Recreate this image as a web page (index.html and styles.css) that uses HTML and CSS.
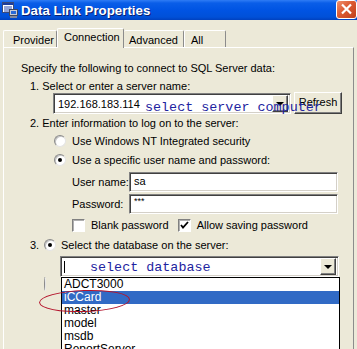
FILE: index.html
```html
<!DOCTYPE html>
<html lang="en">
<head>
    <meta charset="UTF-8">
    <title>Data Link Properties</title>
    <link rel="stylesheet" href="styles.css">
</head>
<body>
<div class="window">
    <div class="titlebar">
        <svg class="app-icon" width="16" height="16" viewBox="0 0 16 16">
            <rect x="0.5" y="0.5" width="11" height="10" fill="#fff" stroke="#3a4a7a"/>
            <rect x="1" y="1" width="10" height="2" fill="#1c3c9c"/>
            <path d="M2 5h8M2 7h8M2 9h6" stroke="#2a4ab0" stroke-width="1"/>
            <rect x="7.5" y="7.5" width="8" height="6" fill="#c8ccd8" stroke="#404860"/>
            <rect x="9" y="9" width="5" height="3" fill="#2a6ad8"/>
            <rect x="8" y="14" width="7" height="2" fill="#8088a0"/>
        </svg>
        <span class="title">Data Link Properties</span>
        <span class="close-btn">
            <svg width="19" height="17" viewBox="0 0 19 17">
                <path d="M5 3.5l9 9M14 3.5l-9 9" stroke="#fff" stroke-width="2.2"/>
            </svg>
        </span>
    </div>

    <div class="tabs">
        <div class="tab tab-provider">Provider</div>
        <div class="tab tab-connection active">Connection</div>
        <div class="tab tab-advanced">Advanced</div>
        <div class="tab tab-all">All</div>
    </div>

    <div class="panel">
        <div class="line intro">Specify the following to connect to SQL Server data:</div>
        <div class="line step step-one">1. Select or enter a server name:</div>

        <div class="server-row">
            <div class="combo combo-server">
                <span class="combo-value">192.168.183.114</span>
                <span class="drop-btn"><span class="arrow"></span></span>
            </div>
            <div class="btn btn-refresh">Refresh</div>
            <span class="note note-server">select server computer</span>
        </div>

        <div class="line step step-two">2. Enter information to log on to the server:</div>

        <div class="option-row option-nt">
            <span class="radio"></span>
            <span>Use Windows NT Integrated security</span>
        </div>
        <div class="option-row option-user">
            <span class="radio checked"></span>
            <span>Use a specific user name and password:</span>
        </div>

        <div class="field-row field-user">
            <label class="field-label">User name:</label>
            <div class="textbox">sa</div>
        </div>
        <div class="field-row field-pass">
            <label class="field-label">Password:</label>
            <div class="textbox textbox-pass">***</div>
        </div>

        <div class="check-row">
            <span class="check-item check-blank">
                <span class="checkbox"></span>
                <span>Blank password</span>
            </span>
            <span class="check-item check-allow">
                <span class="checkbox">
                    <svg width="9" height="9" viewBox="0 0 9 9"><path d="M1 4l2 2.5 5-5.5" fill="none" stroke="#000" stroke-width="1.8"/></svg>
                </span>
                <span>Allow saving password</span>
            </span>
        </div>

        <div class="step-three">
            <span class="step-num">3.</span>
            <span class="radio checked"></span>
            <span>Select the database on the server:</span>
        </div>

        <div class="db-row">
            <div class="combo combo-db">
                <span class="caret"></span>
                <span class="note note-db">select database</span>
                <span class="drop-btn"><span class="arrow"></span></span>
            </div>
        </div>

        <div class="attach-row">
            <span class="radio"></span>
        </div>

        <!-- open dropdown of the database combo -->
        <ul class="db-list">
            <li>ADCT3000</li>
            <li class="selected">iCCard</li>
            <li>master</li>
            <li>model</li>
            <li>msdb</li>
            <li>ReportServer</li>
        </ul>
        <span class="mark"></span>
    </div>
</div>
</body>
</html>
```

FILE: styles.css
```css
:root {
    --face: #ece9d8;
    --shadow: #808080;
    --dark: #404040;
    --note-blue: #1e24a0;
    --select-blue: #316ac5;
}

* {
    box-sizing: border-box;
}

body {
    margin: 0;
    width: 357px;
    height: 349px;
    overflow: hidden;
    background-color: var(--face);
    font-family: "Liberation Sans", Arial, sans-serif;
    font-size: 11px;
    color: #000;
}

/* title bar */
.titlebar {
    height: 20px;
    display: flex;
    align-items: center;
    padding-left: 2px;
    background: linear-gradient(#2f7cf5 0, #0a5ee8 3px, #0054e3 50%, #0050d8 85%, #0041bf 100%);
}

.app-icon {
    flex-shrink: 0;
}

.title {
    margin-left: 3px;
    color: #fff;
    font-weight: bold;
    font-size: 13.3px;
    text-shadow: 1px 1px #0a1e6e;
}

.close-btn {
    margin-left: auto;
    align-self: flex-start;
    width: 21px;
    height: 19px;
    border: 1px solid #fff;
    border-radius: 3px;
    background: linear-gradient(135deg, #f0906c 0%, #dc5a32 45%, #c0401c 100%);
    display: flex;
    align-items: center;
    justify-content: center;
}

/* tabs */
.tabs {
    display: flex;
    align-items: flex-end;
    height: 19px;
    margin-top: 8px;
    padding-left: 3px;
}

.tab {
    height: 17px;
    padding-top: 3px;
    line-height: 13px;
    border-top: 1px solid #fff;
    border-left: 1px solid #fff;
    border-right: 1px solid #8c8c8c;
    border-radius: 2px 2px 0 0;
    white-space: nowrap;
}

.tab-provider {
    width: 54px;
    padding-left: 9px;
}

.tab-connection {
    width: 67px;
    padding-left: 6px;
}

.tab-advanced {
    width: 60px;
    padding-left: 5px;
    border-left: none;
}

.tab-all {
    width: 42px;
    padding-left: 6px;
}

.tab.active {
    height: 20px;
    padding-top: 2px;
    margin-bottom: -1px;
    position: relative;
    z-index: 1;
    background-color: var(--face);
}

/* panel */
.panel {
    position: relative;
    overflow: hidden;
    margin-left: 3px;
    width: 351px;
    height: 302px;
    border-top: 1px solid #fff;
    border-left: 1px solid #fff;
    border-right: 1px solid #8c8c8c;
    padding: 14px 0 0 17px;
}

.line {
    height: 13px;
    line-height: 13px;
    white-space: nowrap;
}

.step {
    padding-left: 9px;
}

.step-one {
    margin-top: 5px;
    height: 12px;
    line-height: 12px;
}

.server-row {
    position: relative;
    display: flex;
    gap: 3px;
    height: 22px;
    padding-left: 32px;
}

/* classic sunken field */
.combo,
.textbox {
    background-color: #fff;
    border: 1px solid;
    border-color: var(--shadow) #fff #fff var(--shadow);
    box-shadow: inset 1px 1px var(--dark), inset -1px -1px #d4d0c8;
}

.combo {
    display: flex;
    align-items: center;
    height: 21px;
    padding: 2px;
}

.combo-server {
    width: 238px;
    margin-top: 1px;
}

.combo-value {
    padding-left: 2px;
}

.drop-btn {
    margin-left: auto;
    width: 16px;
    height: 17px;
    display: flex;
    align-items: center;
    justify-content: center;
    background-color: var(--face);
    border: 1px solid;
    border-color: #fff var(--dark) var(--dark) #fff;
    box-shadow: inset -1px -1px var(--shadow);
}

.arrow {
    width: 0;
    height: 0;
    border-left: 4px solid transparent;
    border-right: 4px solid transparent;
    border-top: 4px solid #000;
}

.btn {
    width: 48px;
    height: 22px;
    line-height: 19px;
    text-align: center;
    background-color: var(--face);
    border: 1px solid;
    border-color: #fff var(--dark) var(--dark) #fff;
    box-shadow: inset -1px -1px var(--shadow);
}

.note {
    font-family: "Liberation Mono", "Courier New", monospace;
    font-size: 13.4px;
    line-height: 14px;
    color: var(--note-blue);
    white-space: nowrap;
}

.note-server {
    position: absolute;
    left: 124px;
    top: 9px;
    z-index: 2;
}

.step-two {
    margin-top: 3px;
}

.option-row {
    display: flex;
    align-items: center;
    gap: 6px;
    height: 14px;
    padding-left: 33px;
    white-space: nowrap;
}

.option-nt {
    margin-top: 4px;
}

.option-user {
    margin-top: 5px;
}

.radio {
    position: relative;
    flex-shrink: 0;
    width: 12px;
    height: 12px;
    border-radius: 50%;
    background-color: #fff;
    border: 1px solid;
    border-color: #8a8a8a #e4e4e4 #e4e4e4 #8a8a8a;
    box-shadow: inset 1px 1px #c4c4c4;
}

.radio.checked::after {
    content: "";
    position: absolute;
    left: 3px;
    top: 3px;
    width: 4px;
    height: 4px;
    border-radius: 50%;
    background-color: #000;
}

.field-row {
    display: flex;
    align-items: center;
    height: 20px;
    padding-left: 51px;
}

.field-user {
    margin-top: 5px;
}

.field-pass {
    margin-top: 2px;
}

.field-label {
    width: 57px;
}

.textbox {
    width: 209px;
    height: 20px;
    line-height: 16px;
    padding-left: 4px;
}

.textbox-pass {
    font-size: 9px;
    line-height: 12px;
}

.check-row {
    display: flex;
    height: 14px;
    margin-top: 4px;
    padding-left: 51px;
    white-space: nowrap;
}

.check-item {
    display: flex;
    align-items: center;
    gap: 6px;
}

.check-allow {
    margin-left: 9px;
}

.checkbox {
    width: 13px;
    height: 13px;
    display: flex;
    align-items: center;
    justify-content: center;
    background-color: #fff;
    border: 1px solid;
    border-color: var(--shadow) #fff #fff var(--shadow);
    box-shadow: inset 1px 1px #b0b0b0;
}

.step-three {
    display: flex;
    align-items: center;
    height: 14px;
    margin-top: 6px;
    padding-left: 9px;
    white-space: nowrap;
}

.step-num {
    width: 14px;
}

.step-three .radio {
    margin-right: 5px;
}

.db-row {
    margin-top: 4px;
    padding-left: 39px;
}

.combo-db {
    width: 279px;
}

.caret {
    width: 1px;
    height: 12px;
    margin-left: 1px;
    background-color: #000;
}

.note-db {
    margin-left: 25px;
    padding-top: 3px;
}

.attach-row {
    margin-top: 1px;
    height: 14px;
    padding-left: 23px;
}

/* dropdown list laid over the rest of the panel */
.db-list {
    position: absolute;
    left: 57px;
    top: 229px;
    width: 279px;
    height: 90px;
    margin: 0;
    padding: 0;
    list-style: none;
    background-color: #fff;
    border: 1px solid #000;
    z-index: 3;
}

.db-list li {
    height: 13px;
    line-height: 13px;
    padding-left: 2px;
    font-size: 12px;
}

.db-list li.selected {
    background-color: var(--select-blue);
    color: #fff;
}

.mark {
    position: absolute;
    left: 35px;
    top: 242px;
    width: 91px;
    height: 22px;
    border: 1px solid #b4142c;
    border-radius: 50%;
    transform: rotate(-2deg);
    z-index: 4;
}
```
